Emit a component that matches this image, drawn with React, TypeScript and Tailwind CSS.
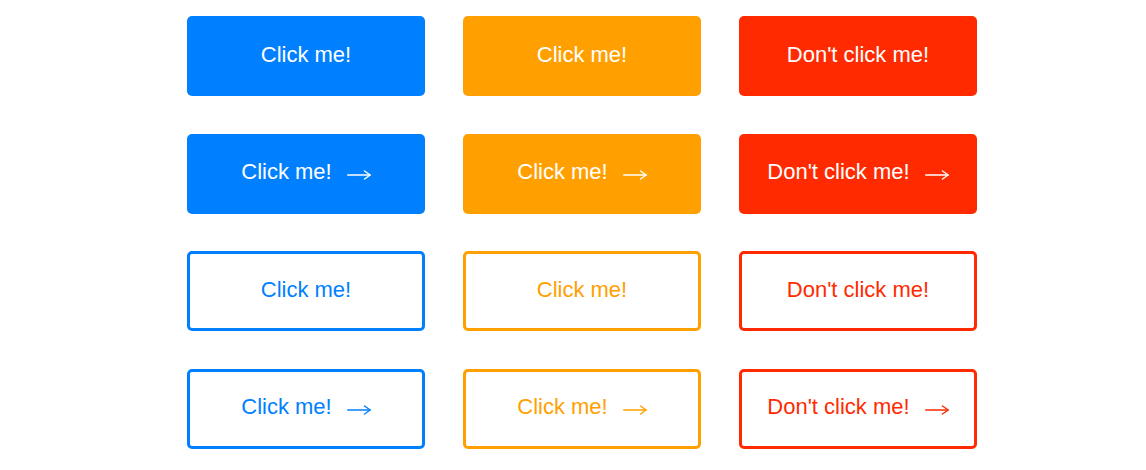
import React from "react";

const colors = [
  { label: "Click me!", solid: "bg-[#0080ff] text-white", outline: "border-[#0080ff] text-[#0080ff]" },
  { label: "Click me!", solid: "bg-[#ffa000] text-white", outline: "border-[#ffa000] text-[#ffa000]" },
  { label: "Don't click me!", solid: "bg-[#ff2a00] text-white", outline: "border-[#ff2a00] text-[#ff2a00]" },
];

function Arrow() {
  return (
    <svg width="24" height="10" viewBox="0 0 24 10" className="ml-[15px] mt-[6px]" fill="none" stroke="currentColor" strokeWidth="1.4" strokeLinecap="round" strokeLinejoin="round">
      <path d="M0.7 5H23" />
      <path d="M17.5 1L23.2 5L17.5 9" />
    </svg>
  );
}

function Btn({ label, cls, arrow, outline }: { label: string; cls: string; arrow?: boolean; outline?: boolean }) {
  return (
    <button
      className={`flex h-[80px] w-[238px] items-center justify-center rounded-[5px] pb-[3px] text-[22px] leading-[26px] ${outline ? "border-[3px] bg-white" : ""} ${cls}`}
      style={{ fontFamily: '"Liberation Sans", Arial, sans-serif' }}
    >
      <span>{label}</span>
      {arrow && <Arrow />}
    </button>
  );
}

export default function App() {
  return (
    <div className="min-h-[470px] w-full bg-white pl-[187px] pt-[16px]">
      <div className="grid grid-cols-[238px_238px_238px] gap-x-[38px] gap-y-[37.67px]">
        {colors.map((c, i) => (
          <Btn key={"a" + i} label={c.label} cls={c.solid} />
        ))}
        {colors.map((c, i) => (
          <Btn key={"b" + i} label={c.label} cls={c.solid} arrow />
        ))}
        {colors.map((c, i) => (
          <Btn key={"c" + i} label={c.label} cls={c.outline} outline />
        ))}
        {colors.map((c, i) => (
          <Btn key={"d" + i} label={c.label} cls={c.outline} outline arrow />
        ))}
      </div>
    </div>
  );
}
